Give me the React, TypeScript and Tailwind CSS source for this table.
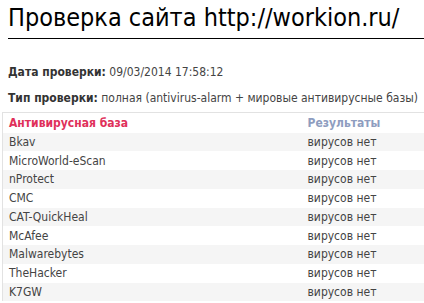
const rows = [
  "Bkav",
  "MicroWorld-eScan",
  "nProtect",
  "CMC",
  "CAT-QuickHeal",
  "McAfee",
  "Malwarebytes",
  "TheHacker",
  "K7GW",
];

export default function App() {
  return (
    <div className="w-[424px] h-[303px] overflow-hidden bg-white text-[#444] font-['DejaVu_Sans_Condensed','DejaVu_Sans',sans-serif]">
      <h1 className="ml-2 pt-[3px] pb-[5px] whitespace-nowrap text-[25px] leading-[30px] text-black border-b border-black">
        Проверка сайта http://workion.ru/
      </h1>
      <div className="px-2 text-[12px] leading-[16px] whitespace-nowrap">
        <p className="mt-[25px]">
          <b className="text-[#333]">Дата проверки:</b> 09/03/2014 17:58:12
        </p>
        <p className="mt-[10px]">
          <b className="text-[#333]">Тип проверки:</b> полная (antivirus-alarm + мировые антивирусные базы)
        </p>
      </div>
      <table className="ml-[2px] mt-[6px] w-[422px] table-fixed border-collapse border-l border-t border-[#e2e2e2] text-[12px] leading-[16px]">
        <thead>
          <tr className="h-[20px]">
            <th className="w-[305px] pl-[6px] text-left font-bold text-[#e0305a]">Антивирусная база</th>
            <th className="text-left font-bold text-[#8e9dbf]">Результаты</th>
          </tr>
        </thead>
        <tbody>
          {rows.map((name, i) => (
            <tr key={name} className={i % 2 === 0 ? "h-[18.75px] bg-[#f5f5f5]" : "h-[18.75px] bg-white"}>
              <td className="pl-[6px]">{name}</td>
              <td>вирусов нет</td>
            </tr>
          ))}
        </tbody>
      </table>
    </div>
  );
}
